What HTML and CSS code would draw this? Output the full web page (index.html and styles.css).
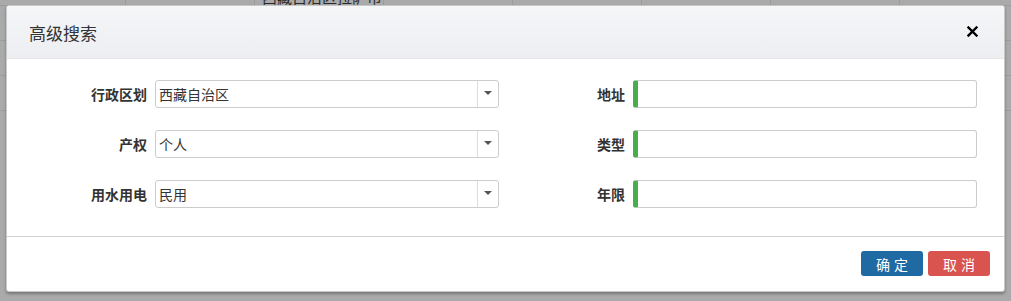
FILE: index.html
```html
<!DOCTYPE html>
<html lang="zh-CN">
<head>
    <meta charset="UTF-8">
    <title>高级搜索</title>
    <link rel="stylesheet" href="styles.css">
</head>
<body>
    <div class="bg-table">
        <div class="bg-row">
            <div class="bg-cell"></div>
            <div class="bg-cell"></div>
            <div class="bg-cell">西藏自治区拉萨市</div>
            <div class="bg-cell"></div>
            <div class="bg-cell"></div>
            <div class="bg-cell"></div>
            <div class="bg-cell"></div>
            <div class="bg-cell"></div>
        </div>
        <div class="bg-row">
            <div class="bg-cell"></div><div class="bg-cell"></div><div class="bg-cell"></div><div class="bg-cell"></div>
            <div class="bg-cell"></div><div class="bg-cell"></div><div class="bg-cell"></div><div class="bg-cell"></div>
        </div>
        <div class="bg-row">
            <div class="bg-cell"></div><div class="bg-cell"></div><div class="bg-cell"></div><div class="bg-cell"></div>
            <div class="bg-cell"></div><div class="bg-cell"></div><div class="bg-cell"></div><div class="bg-cell"></div>
        </div>
        <div class="bg-row">
            <div class="bg-cell"></div><div class="bg-cell"></div><div class="bg-cell"></div><div class="bg-cell"></div>
            <div class="bg-cell"></div><div class="bg-cell"></div><div class="bg-cell"></div><div class="bg-cell"></div>
        </div>
    </div>

    <div class="modal">
        <div class="modal-header">
            <h4 class="modal-title">高级搜索</h4>
            <button class="close" type="button">
                <svg width="11" height="11" viewBox="0 0 11 11">
                    <path d="M1.5 1.5 L9.5 9.5 M9.5 1.5 L1.5 9.5" stroke="#000" stroke-width="2.4" stroke-linecap="square"/>
                </svg>
            </button>
        </div>
        <div class="modal-body">
            <form class="search-form">
                <label class="field-label">行政区划</label>
                <div class="select-box">
                    <span class="select-text">西藏自治区</span>
                    <span class="select-arrow"><i class="caret"></i></span>
                </div>
                <label class="field-label">地址</label>
                <input class="text-input" type="text">

                <label class="field-label">产权</label>
                <div class="select-box">
                    <span class="select-text">个人</span>
                    <span class="select-arrow"><i class="caret"></i></span>
                </div>
                <label class="field-label">类型</label>
                <input class="text-input" type="text">

                <label class="field-label">用水用电</label>
                <div class="select-box">
                    <span class="select-text">民用</span>
                    <span class="select-arrow"><i class="caret"></i></span>
                </div>
                <label class="field-label">年限</label>
                <input class="text-input" type="text">
            </form>
        </div>
        <div class="modal-footer">
            <button class="btn btn-primary" type="button">确 定</button>
            <button class="btn btn-danger" type="button">取 消</button>
        </div>
    </div>
</body>
</html>
```

FILE: styles.css
```css
body {
    margin: 0;
    height: 301px;
    overflow: hidden;
    background: #aaaaaa;
    font-family: "Liberation Sans", "Noto Sans CJK SC", sans-serif;
    font-size: 14px;
    color: #333;
}
.bg-table {
    margin-top: -29px;
}
.bg-row {
    display: grid;
    grid-template-columns: 126px repeat(7, 129px);
    height: 34px;
    border-bottom: 1px solid #9c9c9c;
}
.bg-cell {
    border-right: 1px solid #9c9c9c;
    padding: 0 7px;
    line-height: 54px;
    color: #2a2a2a;
    font-size: 15px;
    white-space: nowrap;
    overflow: hidden;
}
.modal {
    position: absolute;
    top: 5px;
    left: 6px;
    width: 997px;
    background: #fff;
    border: 1px solid #c8c8c8;
    border-radius: 3px;
    box-shadow: 0 2px 3px rgba(0, 0, 0, 0.3);
    overflow: hidden;
}
.modal-header {
    display: flex;
    justify-content: space-between;
    align-items: center;
    height: 52px;
    padding: 0 26px 0 22px;
    background: linear-gradient(#f5f6f8, #eceef1);
    border-bottom: 1px solid #e6e6e6;
}
.modal-title {
    margin: 0;
    font-size: 17px;
    font-weight: normal;
    color: #333;
}
.close {
    display: flex;
    border: none;
    background: none;
    padding: 0;
    margin-top: -2px;
    cursor: pointer;
}
.modal-body {
    padding: 21px 0 28px;
}
.search-form {
    display: grid;
    grid-template-columns: 148px 344px 134px 344px;
    grid-auto-rows: 28px;
    row-gap: 22px;
}
.field-label {
    display: flex;
    align-items: center;
    justify-content: flex-end;
    padding-right: 8px;
    font-weight: bold;
    color: #333;
}
.select-box {
    display: flex;
    border: 1px solid #cccccc;
    border-radius: 3px;
    box-sizing: border-box;
}
.select-text {
    flex: 1;
    display: flex;
    align-items: center;
    padding-left: 3px;
}
.select-arrow {
    width: 20px;
    display: flex;
    align-items: center;
    justify-content: center;
    border-left: 1px solid #dddddd;
}
.caret {
    width: 0;
    height: 0;
    border-left: 4px solid transparent;
    border-right: 4px solid transparent;
    border-top: 4px solid #555;
    margin-top: -2px;
}
.text-input {
    box-sizing: border-box;
    margin: 0;
    border: 1px solid #cccccc;
    border-left: 5px solid #48ad4b;
    border-radius: 3px;
    font: inherit;
    padding: 0 6px;
}
.modal-footer {
    display: flex;
    justify-content: flex-end;
    gap: 5px;
    padding: 14px 14px 15px;
    border-top: 1px solid #d2d2d2;
}
.btn {
    width: 62px;
    height: 25px;
    border: none;
    border-radius: 3px;
    color: #fff;
    font: inherit;
    font-size: 14px;
    padding: 0;
    cursor: pointer;
}
.btn-primary {
    background: #1f6aa2;
}
.btn-danger {
    background: #d9534f;
}
```
